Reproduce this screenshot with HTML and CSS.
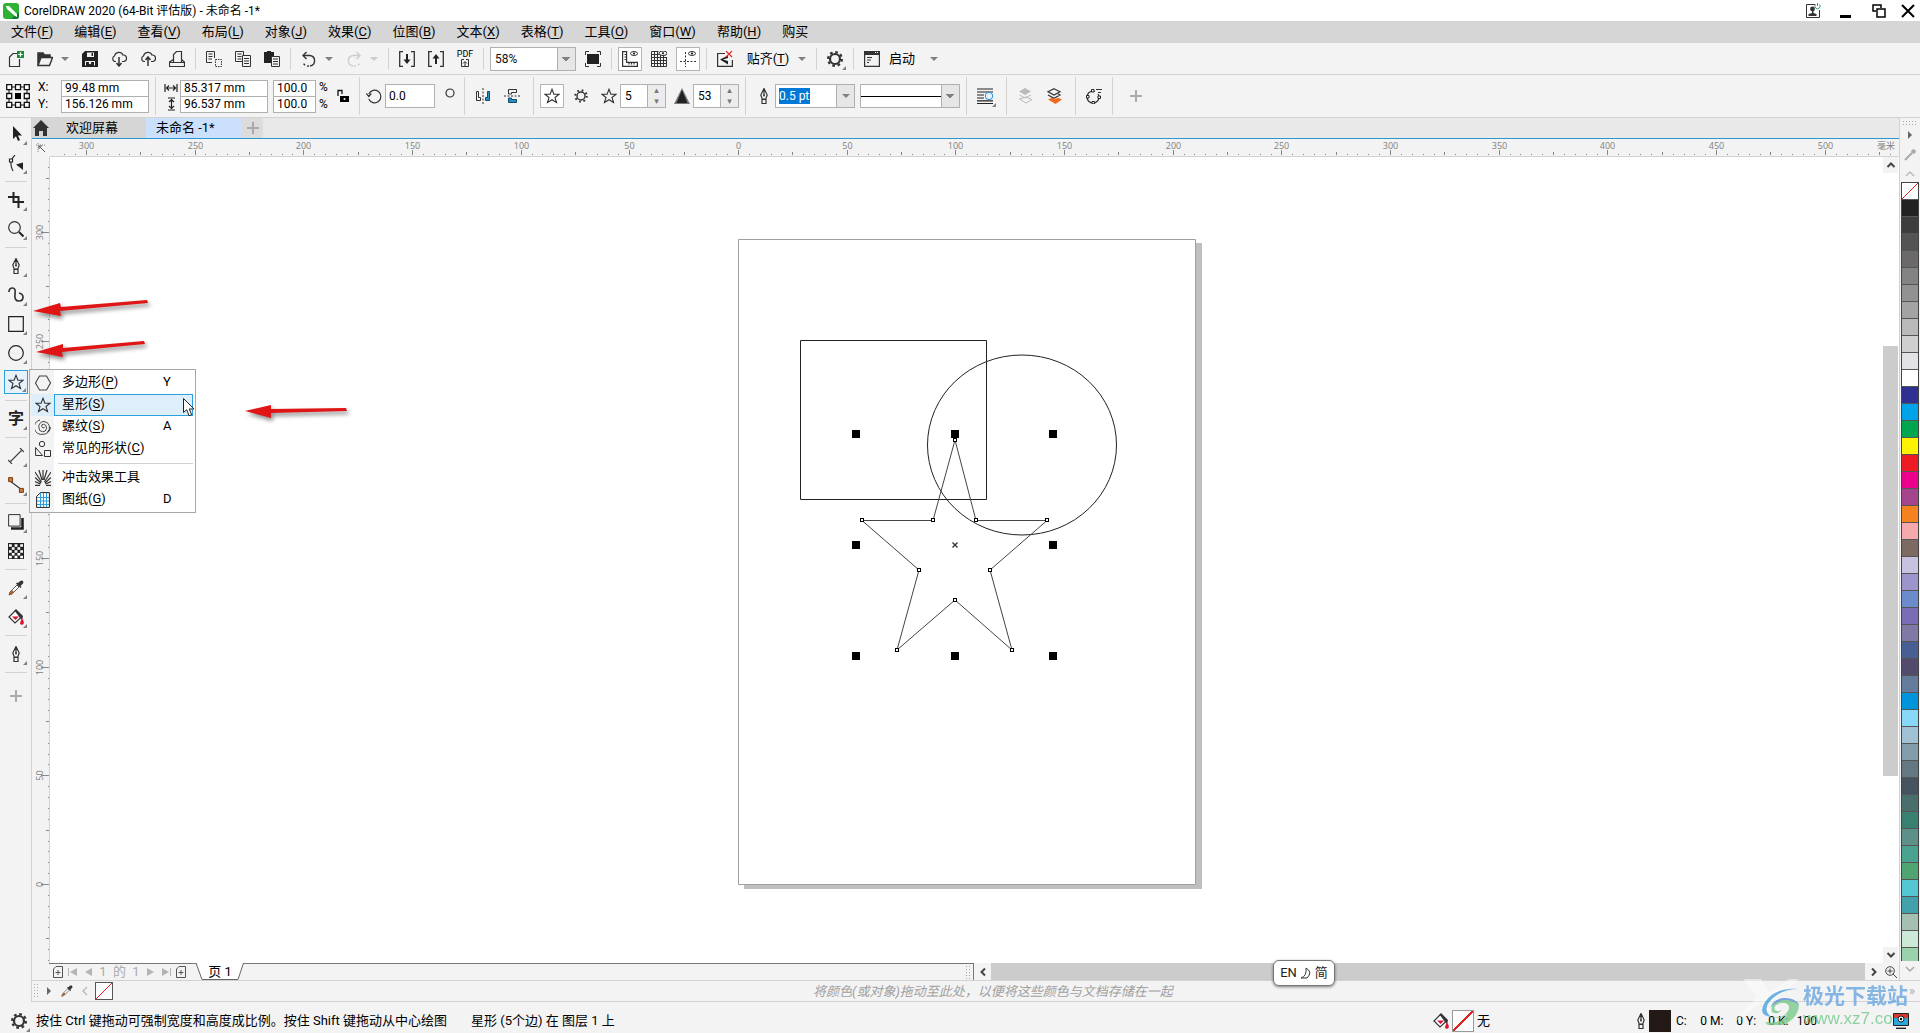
FILE: index.html
```html
<!DOCTYPE html>
<html lang="zh-CN">
<head>
<meta charset="utf-8">
<title>CorelDRAW 2020 (64-Bit 评估版) - 未命名 -1*</title>
<link rel="stylesheet" href="styles.css">
</head>
<body>
<svg class="sprite" aria-hidden="true">
  <symbol id="star" viewBox="0 0 16 16"><path d="M8 1.2l1.9 4.9 5.2.2-4.1 3.2 1.5 5L8 11.7l-4.5 2.8 1.5-5L.9 6.3l5.2-.2z" fill="none" stroke="currentColor" stroke-width="1.1"/></symbol>
  <symbol id="pen" viewBox="0 0 16 16"><path d="M8 .5L4.8 7l1.4 4h3.6l1.4-4zM8 1v6M6 11.5h4v4H6z" fill="none" stroke="currentColor" stroke-width="1.2"/><circle cx="8" cy="7.5" r="1" fill="currentColor"/></symbol>
  <symbol id="gear" viewBox="0 0 16 16"><circle cx="8" cy="8" r="5" fill="none" stroke="currentColor" stroke-width="2.2"/><circle cx="8" cy="8" r="6.9" fill="none" stroke="currentColor" stroke-width="2.2" stroke-dasharray="2.7 2.72"/></symbol>
  <symbol id="caret" viewBox="0 0 8 4"><path d="M0 0h8L4 4z" fill="currentColor"/></symbol>
  <symbol id="dropper" viewBox="0 0 16 16"><path d="M1 15l1-3 7-7 2 2-7 7z" fill="#fff" stroke="#555" stroke-width="1"/><path d="M1 15l1-3 2-2 2 2-2 2z" fill="#b5652b"/><path d="M8 3.5L12.5 8l1-1-1-1 2.5-2.5Q16 1 14 .5 12.500 0 10 3L9 2.500z" fill="#333"/></symbol>
  <symbol id="bucket" viewBox="0 0 16 16"><path d="M7.500 1.500L1 8l6 6 6.500-6z" fill="#fff" stroke="#333" stroke-width="1.200"/><path d="M6.500 1.500L8 0l7 7-1 4-2-2z" fill="#333"/><path d="M4 7.500h7L7.500 11z" fill="#e01030"/><path d="M14 9q3 5 1 6.500-3 1-3-1.500z" fill="#e01030"/></symbol>
  <symbol id="addpage" viewBox="0 0 10 12"><path d="M3 .5h6.500v11H.5V3zM2.500 6.500h5M5 4v5" fill="none" stroke="#555"/></symbol>
  <symbol id="plus" viewBox="0 0 12 12"><path d="M6 0v12M0 6h12" stroke="#aaa" stroke-width="2"/></symbol>
</svg>

<header class="titlebar">
  <svg class="logo" viewBox="0 0 16 16"><rect width="16" height="16" rx="3" fill="#2eb135"/><path d="M16 9v4a3 3 0 0 1-3 3H8z" fill="#0c7a2e"/><path d="M3 3l3 0 8 8v3l-2-1-8-7z" fill="#fff"/></svg>
  <h1>CorelDRAW 2020 (64-Bit 评估版) - 未命名 -1*</h1>
  <div class="window-buttons">
    <button aria-label="账户"><svg class="ic" viewBox="0 0 16 16"><path d="M10 1.500H1.500v13h13V7" fill="none" stroke="#333"/><circle cx="7.500" cy="6" r="2.400" fill="#333"/><path d="M7 7h1.500v3l3 1v2h-8v-2L7 10z" fill="#333"/><path d="M10.500 1.500a2.600 2.600 0 1 0 4 0M12.500 0v3" fill="none" stroke="#2a9d5c"/></svg></button>
    <button aria-label="最小化"><svg class="ic" viewBox="0 0 16 16"><path d="M2 13.500h11" stroke="#000" stroke-width="3"/></svg></button>
    <button aria-label="还原"><svg class="ic" viewBox="0 0 16 16"><path d="M5 8H2V2h8v3M6 6h8v8H6z" fill="none" stroke="#000" stroke-width="1.500"/></svg></button>
    <button aria-label="关闭"><svg class="ic" viewBox="0 0 16 16"><path d="M2 2l12 12M14 2L2 14" stroke="#000" stroke-width="2"/></svg></button>
  </div>
</header>

<nav class="menubar">
  <button>文件(<u>F</u>)</button><button>编辑(<u>E</u>)</button><button>查看(<u>V</u>)</button><button>布局(<u>L</u>)</button><button>对象(<u>J</u>)</button><button>效果(<u>C</u>)</button><button>位图(<u>B</u>)</button><button>文本(<u>X</u>)</button><button>表格(<u>T</u>)</button><button>工具(<u>O</u>)</button><button>窗口(<u>W</u>)</button><button>帮助(<u>H</u>)</button><button>购买</button>
</nav>

<div class="toolbar standard">
  <button class="tb" aria-label="新建"><svg class="ic" viewBox="0 0 16 16"><path d="M9 2.500H5L1.500 6v9.500h10V8" fill="none" stroke="#333" stroke-width="1.200"/><path d="M9 0h7v7H9z" fill="#1a8a3a"/><path d="M12.500 1.200v4.600M10.200 3.500h4.600" stroke="#fff" stroke-width="1.200"/></svg></button>
  <span class="split"><button class="tb" aria-label="打开"><svg class="ic" viewBox="0 0 16 16"><path d="M1 14V2h5l1.500 2H13v3" fill="none" stroke="#333" stroke-width="1.500"/><path d="M1 14.500L4 6.500h11.500l-3 8z" fill="#f3f3f3" stroke="#333" stroke-width="1.400"/><path d="M1 2h5l1 2h6v2H4l-3 7z" fill="#333"/></svg></button><button class="dd" aria-label="最近文件"><svg><use href="#caret"/></svg></button></span>
  <button class="tb" aria-label="保存"><svg class="ic" viewBox="0 0 16 16"><path d="M3 0h13v16H0V3z" fill="#222"/><path d="M5 1.500h7V6H5zM3 10h10v4.500H3z" fill="#f3f3f3"/><path d="M9.500 2h1.500v3H9.500zM4 11h8v4H4z" fill="#222"/><circle cx="8" cy="12" r="1.200" fill="#f3f3f3"/></svg></button>
  <button class="tb" aria-label="从云打开"><svg class="ic" viewBox="0 0 16 16"><path d="M5 10.500H3.500a3 3 0 0 1 0-5.500 4.500 4.500 0 0 1 8.500-1 3.300 3.300 0 0 1 1 6.500H11" fill="none" stroke="#333" stroke-width="1.200"/><path d="M8 6v8M5.500 12L8 15l2.500-3" fill="none" stroke="#333" stroke-width="1.500"/></svg></button>
  <button class="tb" aria-label="保存到云"><svg class="ic" viewBox="0 0 16 16"><path d="M5 10.500H3.500a3 3 0 0 1 0-5.500 4.500 4.500 0 0 1 8.500-1 3.300 3.300 0 0 1 1 6.500H11" fill="none" stroke="#333" stroke-width="1.200"/><path d="M8 15V7M5.500 9L8 6l2.500 3" fill="none" stroke="#333" stroke-width="1.500"/></svg></button>
  <button class="tb" aria-label="打印"><svg class="ic" viewBox="0 0 16 16"><path d="M4.500 11V3.500l3-3h5V11M4.500 8.500L.5 11v4.500h15V11l-3-2.500M1 11.500h14" fill="none" stroke="#333" stroke-width="1.200"/></svg></button>
  <i class="sep"></i>
  <button class="tb" aria-label="剪切"><svg class="ic" viewBox="0 0 16 16"><path d="M8.500 7V.5h-8v11H6M2.500 3h4M2.500 5.500h4M2.500 8H6" fill="none" stroke="#333"/><path d="M9.500 8.500h6v7h-6z" fill="none" stroke="#333" stroke-dasharray="1.500 1"/></svg></button>
  <button class="tb" aria-label="复制"><svg class="ic" viewBox="0 0 16 16"><path d="M.5.500h8v10h-8zM2.500 3h4M2.500 5.500h4M2.500 8h4" fill="none" stroke="#333"/><path d="M7.500 4.500h8v11h-8z" fill="#f3f3f3" stroke="#333"/><path d="M9 7.500h5M9 10h5M9 12.500h5" stroke="#333"/></svg></button>
  <button class="tb" aria-label="粘贴"><svg class="ic" viewBox="0 0 16 16"><path d="M0 1h3V0h4v1h3v11H0z" fill="#222"/><path d="M7.500 5.500h8v10h-8z" fill="#f3f3f3" stroke="#333"/><path d="M9 8h5M9 10.500h5M9 13h5" stroke="#333"/></svg></button>
  <i class="sep"></i>
  <span class="split"><button class="tb" aria-label="撤消"><svg class="ic" viewBox="0 0 16 16"><path d="M3 4.500h6a5.300 5.300 0 0 1 0 10.500" fill="none" stroke="#333" stroke-width="1.400"/><path d="M5.500 1L2 4.500 5.500 8" fill="none" stroke="#333" stroke-width="1.400"/><path d="M8 15a5 5 0 0 1-6-4" fill="none" stroke="#333" stroke-width="1.400" stroke-dasharray="2 2"/></svg></button><button class="dd" aria-label="撤消列表"><svg><use href="#caret"/></svg></button></span>
  <span class="split off"><button class="tb" aria-label="重做" disabled><svg class="ic" viewBox="0 0 16 16"><path d="M13 4.500H7A5.300 5.300 0 0 0 7 15M10.500 1L14 4.500 10.500 8" fill="none" stroke="#ccc" stroke-width="1.400"/><path d="M8 15a5 5 0 0 0 6-4" fill="none" stroke="#ccc" stroke-width="1.400" stroke-dasharray="2 2"/></svg></button><button class="dd" aria-label="重做列表" disabled><svg><use href="#caret"/></svg></button></span>
  <i class="sep"></i>
  <button class="tb" aria-label="导入"><svg class="ic" viewBox="0 0 16 16"><path d="M4 .7H.7v14.600H4M12 .7h3.300v14.600H12" fill="none" stroke="#333" stroke-width="1.300"/><path d="M8 3v7" stroke="#222" stroke-width="2"/><path d="M4.500 8.500h7L8 13z" fill="#222"/></svg></button>
  <button class="tb" aria-label="导出"><svg class="ic" viewBox="0 0 16 16"><path d="M4 .7H.7v14.600H4M12 .7h3.300v14.600H12" fill="none" stroke="#333" stroke-width="1.300"/><path d="M8 13V6" stroke="#222" stroke-width="2"/><path d="M4.500 7.500h7L8 3z" fill="#222"/></svg></button>
  <button class="tb pdf" aria-label="发布为 PDF"><span>PDF</span><svg viewBox="0 0 8 8"><path d="M3 .5H.5v7h7v-7H5M4 7V3M2 4.500L4 2.500l2 2" fill="none" stroke="#333"/></svg></button>
  <i class="sep"></i>
  <select class="combo zoom" aria-label="缩放级别"><option>58%</option></select>
  <button class="tb" aria-label="全屏预览"><svg class="ic" viewBox="0 0 16 16"><path d="M2 3h12v10H2z" fill="#222"/><path d="M.5 4V.5H4M12 .5h3.500V4M15.500 12v3.500H12M4 15.500H.5V12" fill="none" stroke="#333"/></svg></button>
  <i class="sep"></i>
  <button class="tb on" aria-label="显示标尺"><svg class="ic" viewBox="0 0 16 16"><path d="M.6.600h4v10.800h10.800v4H.6zM2.500 3.500h2M2.500 6h2M2.500 8.500h2M7 11.500v2M9.500 11.500v2M12 11.500v2" fill="none" stroke="#333" stroke-width="1.200"/><ellipse cx="12" cy="2.500" rx="3.500" ry="2" fill="none" stroke="#333"/><circle cx="12" cy="2.500" r="1"/></svg></button>
  <button class="tb" aria-label="显示网格"><svg class="ic" viewBox="0 0 16 16"><path d="M.5.500v15h15V6M.5.500h7M.5 3.500h15M.5 6.500h15M.5 9.500h15M.5 12.500h15M3.500.500v15M6.500.500v15M9.500 4v11.500M12.500 4v11.500" fill="none" stroke="#333"/><ellipse cx="12" cy="2.300" rx="4" ry="2.300" fill="#f3f3f3" stroke="#333"/><circle cx="12" cy="2.300" r="1"/></svg></button>
  <button class="tb on" aria-label="显示辅助线"><svg class="ic" viewBox="0 0 16 16"><path d="M0 10.500h16M5.500 1v15" stroke="#333" stroke-dasharray="2 1.500"/><ellipse cx="12" cy="2.500" rx="3.500" ry="2" fill="none" stroke="#333"/><circle cx="12" cy="2.500" r="1"/></svg></button>
  <i class="sep"></i>
  <button class="tb" aria-label="关闭贴齐"><svg class="ic" viewBox="0 0 16 16"><path d="M8 2.500H.6v12.900h14.800V9" fill="none" stroke="#333" stroke-width="1.200"/><path d="M3 8.500l8-4v9z" fill="#222"/><path d="M6 8.500l5-1.500v3z" fill="#f3f3f3"/><path d="M9 0l6 6M15 0L9 6" stroke="#e3262d" stroke-width="1.200"/></svg></button>
  <span class="split"><button class="txt snap">贴齐(<u>T</u>)</button><button class="dd" aria-label="贴齐选项"><svg><use href="#caret"/></svg></button></span>
  <i class="sep"></i>
  <button class="tb fly" aria-label="选项"><svg class="ic"><use href="#gear"/></svg></button>
  <i class="sep"></i>
  <button class="tb" aria-label="应用程序启动器"><svg class="ic" viewBox="0 0 16 16"><path d="M.6.600h14.800v14.800H.6z" fill="none" stroke="#333" stroke-width="1.200"/><path d="M0 0h16v4H0z" fill="#333"/><path d="M11 1.500h1M13 1.500h1" stroke="#fff"/><path d="M3 6.500h5M3 9h4M3 11.500h2" stroke="#333"/></svg></button>
  <span class="split"><button class="txt">启动</button><button class="dd wide" aria-label="启动选项"><svg><use href="#caret"/></svg></button></span>
</div>

<div class="toolbar property">
  <svg class="origin" viewBox="0 0 24 24"><path d="M3 3h18v18H3z" fill="none" stroke="#111"/><g fill="#fff" stroke="#111" stroke-width="1.300"><path d="M.7.700h5v5h-5zM9.500.700h5v5h-5zM18.300.700h5v5h-5zM.7 9.500h5v5h-5zM18.300 9.500h5v5h-5zM.7 18.300h5v5h-5zM9.500 18.300h5v5h-5zM18.300 18.300h5v5h-5z"/></g><path d="M9 9h6v6H9z"/></svg>
  <div class="pair labels"><label for="px">X:</label><label for="py">Y:</label></div>
  <div class="pair"><input id="px" value="99.48 mm"><input id="py" value="156.126 mm"></div>
  <i class="sep"></i>
  <div class="pair icons"><svg viewBox="0 0 14 14"><path d="M1 3v8M13 3v8M2 7h10M5 4.500L2.500 7 5 9.500M9 4.500L11.500 7 9 9.500" fill="none" stroke="#222" stroke-width="1.200"/></svg><svg viewBox="0 0 14 14"><path d="M4 1h7M4 13h7M7.500 2v10M5 5l2.500-2.500L10 5M5 9l2.500 2.500L10 9" fill="none" stroke="#222" stroke-width="1.200"/></svg></div>
  <div class="pair size"><input aria-label="宽度" value="85.317 mm"><input aria-label="高度" value="96.537 mm"></div>
  <div class="pair scale"><input aria-label="水平缩放" value="100.0"><input aria-label="垂直缩放" value="100.0"></div>
  <div class="pair pct"><span>%</span><span>%</span></div>
  <button class="tb lock" aria-label="锁定比率"><svg class="ic" viewBox="0 0 16 16"><path d="M3 8V2.500h4V6" fill="none" stroke="#111" stroke-width="1.300"/><path d="M5 8h9v6H5z"/><circle cx="9.500" cy="11" r="1" fill="#fff"/></svg></button>
  <i class="sep"></i>
  <label class="ic" for="rot"><svg class="ic" viewBox="0 0 16 16"><path d="M2.500 11a6.300 6.300 0 1 0 0-5M0 5.500L2.500 8.500 5 5.500" fill="none" stroke="#333" stroke-width="1.200" transform="translate(.3)"/></svg></label>
  <input id="rot" class="field rot" value="0.0">
  <svg class="degree" viewBox="0 0 10 10"><circle cx="5" cy="5" r="4" fill="none" stroke="#333" stroke-width="1.200"/></svg>
  <i class="sep"></i>
  <button class="tb" aria-label="水平镜像"><svg class="ic" viewBox="0 0 16 16"><path d="M1.500 3.500h2v6h2v3h-4z" fill="none" stroke="#333"/><path d="M8 0v16" stroke="#333" stroke-dasharray="2 1.500"/><path d="M14.500 3.500h-2v6h-2v3h4z" fill="#2a8fc0" stroke="#154b66"/></svg></button>
  <button class="tb" aria-label="垂直镜像"><svg class="ic" viewBox="0 0 16 16"><path d="M4.500 1.500h8v3h-5v1.500h-3z" fill="none" stroke="#333"/><path d="M0 8h16" stroke="#333" stroke-dasharray="2 1.500"/><path d="M4.500 10h3v1.500h5v3h-8z" fill="#2a8fc0" stroke="#154b66"/></svg></button>
  <i class="sep push"></i>
  <button class="tb on" aria-label="星形"><svg class="ic"><use href="#star"/></svg></button>
  <button class="tb" aria-label="复杂星形"><svg class="ic" viewBox="0 0 16 16"><circle cx="8" cy="8" r="4" fill="none" stroke="#333" stroke-width="1.400"/><circle cx="8" cy="8" r="5.700" fill="none" stroke="#333" stroke-width="2" stroke-dasharray="1.700 2.780"/></svg></button>
  <div class="spin"><label for="pts"><svg class="ic"><use href="#star"/></svg></label><input id="pts" value="5"><div><button aria-label="增加点数">▴</button><button aria-label="减少点数">▾</button></div></div>
  <div class="spin sharp"><label for="shp"><svg class="ic" viewBox="0 0 16 16"><path d="M8 0l8 16H0z" fill="#777"/><path d="M8 2l5.500 13h-11z" fill="#222"/></svg></label><input id="shp" value="53"><div><button aria-label="增加锐度">▴</button><button aria-label="减少锐度">▾</button></div></div>
  <i class="sep"></i>
  <label class="tb" for="ow"><svg class="ic"><use href="#pen"/></svg></label>
  <div class="combobox"><input id="ow" value="0.5 pt"><button aria-label="轮廓宽度"><svg><use href="#caret"/></svg></button></div>
  <select class="combo line" aria-label="线条样式"><option aria-label="实线"></option></select>
  <i class="sep"></i>
  <button class="tb fly" aria-label="文本换行"><svg class="ic" viewBox="0 0 16 16"><path d="M0 1h16M0 4h16M0 7h7M0 10h7M0 12.800h16M0 15.500h16" stroke="#222" stroke-width="1.200"/><circle cx="12" cy="8" r="3.700" fill="#e4f3fd" stroke="#2a8fd0"/></svg></button>
  <i class="sep push"></i>
  <button class="tb" aria-label="到图层前面" disabled><svg class="ic" viewBox="0 0 16 16"><path d="M8 0l6 3.500L8 7 2 3.500z" fill="#bbb"/><path d="M2.500 7L8 10l6-3M2.500 11L9 15l6-3.500L9 9z" fill="none" stroke="#bbb"/></svg></button>
  <button class="tb" aria-label="到图层后面"><svg class="ic" viewBox="0 0 16 16"><path d="M8 .7l6 3L8 7 2 3.700zM2 7l6 3.300L14 7l-2-1" fill="none" stroke="#333" stroke-width="1.200"/><path d="M2 11.500L6 9.800l3 1.500 3-1.500 4 1.700L9.500 16z" fill="#f26a1b"/></svg></button>
  <i class="sep push"></i>
  <button class="tb" aria-label="转换为曲线"><svg class="ic" viewBox="0 0 16 16"><circle cx="7" cy="9" r="6" fill="none" stroke="#333" stroke-width="1.200"/><path d="M9 0h7v6H9z" fill="#f3f3f3"/><g fill="#fff" stroke="#222"><path d="M5.500 1.500h2.500V4H5.500zM.5 7.500H3V10H.5zM6 13.500h2.500v2.300H6zM12 8h2.500v2.500H12z"/></g><path d="M10 1.500h6M12 4.500h3" fill="none" stroke="#333"/></svg></button>
  <i class="sep"></i>
  <button class="tb add" aria-label="自定义"><svg><use href="#plus"/></svg></button>
</div>

<main class="work">
  <aside class="toolbox">
    <button class="tb fly" aria-label="选择工具"><svg class="ic" viewBox="0 0 16 16"><path d="M5 0v13l3-2.800L10 15l2-1-2-4.500h4z" fill="#222"/></svg></button>
    <button class="tb fly" aria-label="形状工具"><svg class="ic" viewBox="0 0 16 16"><path d="M7 0Q0 7 5 16" fill="none" stroke="#333" stroke-width="1.200"/><path d="M1.500 4h3v3h-3z" fill="#fff" stroke="#222" stroke-width="1.200"/><path d="M8 9.500l7-2v7.500l-2.500-2z" fill="#222"/></svg></button>
    <hr>
    <button class="tb fly" aria-label="裁剪工具"><svg class="ic" viewBox="0 0 16 16"><path d="M5.500 0v10H16M0 5h10.500v11" fill="none" stroke="#222" stroke-width="2"/></svg></button>
    <button class="tb fly" aria-label="缩放工具"><svg class="ic" viewBox="0 0 16 16"><circle cx="6.500" cy="6.500" r="5.800" fill="none" stroke="#333" stroke-width="1.200"/><path d="M11 11l4.500 4.500" stroke="#222" stroke-width="2"/></svg></button>
    <hr>
    <button class="tb fly" aria-label="手绘工具"><svg class="ic"><use href="#pen"/></svg></button>
    <button class="tb fly" aria-label="曲线工具"><svg class="ic" viewBox="0 0 16 16"><path d="M1 5Q1 1 4.500 1 8 1 7 7q-1 7 4 7 4 0 4-4 0-3-4-4" fill="none" stroke="#333" stroke-width="1.700"/></svg></button>
    <button class="tb fly" aria-label="矩形工具"><svg class="ic" viewBox="0 0 16 16"><path d="M.7.700h14.600v14.600H.7z" fill="none" stroke="#222" stroke-width="1.200"/></svg></button>
    <button class="tb fly" aria-label="椭圆形工具"><svg class="ic" viewBox="0 0 16 16"><circle cx="8" cy="8" r="7.300" fill="none" stroke="#222" stroke-width="1.200"/></svg></button>
    <button class="tb fly active" aria-label="星形工具"><svg class="ic"><use href="#star"/></svg></button>
    <hr>
    <button class="tb fly glyph" aria-label="文本工具">字</button>
    <hr>
    <button class="tb fly" aria-label="平行度量工具"><svg class="ic" viewBox="0 0 16 16"><path d="M2 14L14 2M0 12l4 4M12 0l4 4" fill="none" stroke="#444" stroke-width="1.200"/></svg></button>
    <button class="tb fly" aria-label="连接器工具"><svg class="ic" viewBox="0 0 16 16"><path d="M2 4l12 9" stroke="#333" stroke-width="1.200"/><path d="M.6.600h4v4h-4zM11.400 11.400h4v4h-4z" fill="#c87941" stroke="#7a3f12"/></svg></button>
    <hr>
    <button class="tb fly" aria-label="阴影工具"><svg class="ic" viewBox="0 0 16 16"><path d="M3 14.500h11.500V4" fill="none" stroke="#222" stroke-width="2.600"/><path d="M.6.600h11.500v11.500H.6z" fill="#f3f3f3" stroke="#333"/></svg></button>
    <button class="tb" aria-label="透明度工具"><svg class="ic" viewBox="0 0 16 16"><path d="M0 0h16v16H0z" fill="#222"/><path d="M1 2.500h14M1 8.500h14M1 14h14" stroke="#fff" stroke-width="2.500" stroke-dasharray="2.800 2.800"/><path d="M3.800 5.500h11M3.800 11.300h11" stroke="#fff" stroke-width="2.500" stroke-dasharray="2.800 2.800"/></svg></button>
    <hr>
    <button class="tb fly" aria-label="颜色滴管工具"><svg class="ic"><use href="#dropper"/></svg></button>
    <button class="tb fly" aria-label="交互式填充工具"><svg class="ic"><use href="#bucket"/></svg></button>
    <hr>
    <button class="tb fly" aria-label="轮廓笔"><svg class="ic"><use href="#pen"/></svg></button>
    <hr>
    <button class="tb tall" aria-label="自定义工具箱"><svg><use href="#plus"/></svg></button>
  </aside>

  <div class="content">
    <div class="docrow">
      <section class="document">
        <div class="tabs">
          <button class="home" aria-label="主页"><svg viewBox="0 0 16 16"><path d="M8 0l8 8h-2v8h-4v-5H6v5H2V8H0z" fill="#333"/></svg></button>
          <button class="tab">欢迎屏幕</button>
          <button class="tab current">未命名 -1*</button>
          <button class="newtab" aria-label="新建文档"><svg><use href="#plus"/></svg></button>
        </div>
        <div class="stage">
          <div class="corner"><svg viewBox="0 0 10 10"><path d="M0 2h10M2 0v10" stroke="#888" stroke-dasharray="1 1"/><path d="M3 3l6 6M3 6V3h3" fill="none" stroke="#555"/></svg></div>
          <svg class="hruler" id="hruler"></svg>
          <svg class="vruler" id="vruler"></svg>
          <div class="view">
            <svg class="drawing" role="img" aria-label="绘图页面">
              <g transform="translate(-50 -157)">
                <path d="M744 243h458v646H744z" fill="#bfbfbf"/>
                <path d="M738.500 239.500h457v645h-457z" fill="#fff" stroke="#a0a0a0"/>
                <g fill="none" stroke="#222">
                  <path d="M800.500 340.500h186v159h-186z"/>
                  <ellipse cx="1022" cy="445" rx="94.500" ry="90"/>
                  <path d="M955 440l21 80.500h71L990 570l22 80-57-50-58 50 22-80-57-49.500h71z" stroke="#444"/>
                </g>
                <g id="nodes"></g>
                <g id="handles"></g>
                <path d="M952.500 542.500l5 5M957.500 542.500l-5 5" stroke="#333" stroke-width="1.300"/>
              </g>
            </svg>
          </div>
          <div class="vscroll"><button aria-label="向上滚动"><svg viewBox="0 0 10 10"><path d="M1.500 7L5 3.500 8.500 7" /></svg></button><div class="track"><div class="thumb"></div></div><button aria-label="向下滚动"><svg viewBox="0 0 10 10"><path d="M1.500 3L5 6.500 8.500 3"/></svg></button></div>
        </div>
        <div class="pagerow">
          <div class="pagenav">
            <button aria-label="前面添加页"><svg class="pg"><use href="#addpage"/></svg></button>
            <button aria-label="第一页"><svg class="arr" viewBox="0 0 10 8"><path d="M0 0h1v8H0zM9 0v8L2 4z"/></svg></button>
            <button aria-label="上一页"><svg class="arr" viewBox="0 0 10 8"><path d="M9 0v8L2 4z"/></svg></button>
            <span>1</span><span>的</span><span>1</span>
            <button aria-label="下一页"><svg class="arr" viewBox="0 0 10 8"><path d="M1 0v8l7-4z"/></svg></button>
            <button aria-label="最后一页"><svg class="arr" viewBox="0 0 10 8"><path d="M9 0h1v8H9zM1 0v8l7-4z"/></svg></button>
            <button aria-label="后面添加页"><svg class="pg"><use href="#addpage"/></svg></button>
            <button class="pagetab"><svg viewBox="0 0 48 17" preserveAspectRatio="none"><path d="M0 0l6 16.500h36L47.500 0" fill="#fff" stroke="#666"/></svg><span>页 1</span></button>
            <i class="grip"></i>
          </div>
          <div class="hscroll"><button aria-label="向左滚动"><svg viewBox="0 0 10 10"><path d="M7 1.500L3.500 5 7 8.500"/></svg></button><div class="thumb"></div><button aria-label="向右滚动"><svg viewBox="0 0 10 10"><path d="M3 1.500L6.500 5 3 8.500"/></svg></button><button aria-label="导航器"><svg class="nav" viewBox="0 0 12 12"><circle cx="5" cy="5" r="4.300"/><path d="M8 8l4 4M5 2.500v5M2.500 5h5" /></svg></button></div>
        </div>
      </section>
      <aside class="palette">
        <i class="grip"></i>
        <button aria-label="调色板菜单"><svg class="s10" viewBox="0 0 10 10"><path d="M3 1l4 4-4 4z" fill="#666"/></svg></button>
        <button class="eye" aria-label="滴管"><svg class="s12" viewBox="0 0 12 12"><path d="M1 11l7-7" stroke="#aaa" stroke-width="2"/><circle cx="9.500" cy="2.500" r="2.300" fill="#aaa"/></svg></button>
        <button class="up" aria-label="向上"><svg class="s10" viewBox="0 0 10 10"><path d="M1 7l4-4 4 4" fill="none" stroke="#bbb" stroke-width="1.500"/></svg></button>
        <div class="swatches" id="swatches"></div>
        <button class="down" aria-label="向下"><svg class="s10" viewBox="0 0 10 10"><path d="M1 3l4 4 4-4" fill="none" stroke="#aaa" stroke-width="1.500"/></svg></button>
      </aside>
    </div>
    <div class="docpalette">
      <i class="grip"></i>
      <svg class="s10" viewBox="0 0 10 10"><path d="M3 1l4 4-4 4z" fill="#666"/></svg>
      <svg class="s12"><use href="#dropper"/></svg>
      <svg class="s10" viewBox="0 0 10 10"><path d="M7 1L3 5l4 4" fill="none" stroke="#bbb" stroke-width="1.500"/></svg>
      <button class="none" aria-label="无颜色"></button>
      <p>将颜色(或对象)拖动至此处，以便将这些颜色与文档存储在一起</p>
      <span class="more">»</span>
    </div>
  </div>
</main>

<footer class="status">
  <button class="tb fly" aria-label="状态栏选项"><svg class="ic"><use href="#gear"/></svg></button>
  <p class="hint">按住 Ctrl 键拖动可强制宽度和高度成比例。按住 Shift 键拖动从中心绘图</p>
  <p class="object">星形 (5个边) 在 图层 1 上</p>
  <div class="fill"><svg class="ic"><use href="#bucket"/></svg><i class="none"></i><span>无</span></div>
  <div class="outline"><svg class="ic"><use href="#pen"/></svg><i class="black"></i><span class="cmyk"><b>C:</b><b>0</b><b>M:</b><b>0</b><b>Y:</b><b>0</b><b>K:</b><b>100</b></span></div>
  <svg class="proof" viewBox="0 0 16 16"><path d="M.5.500h15v12H.5z" fill="#2aa7dc" stroke="#222"/><path d="M1 1h14v4H1z" fill="#d33a2c"/><circle cx="8" cy="6" r="3" fill="#fff" stroke="#222"/><circle cx="8" cy="6" r="1.200"/><path d="M3 15.300h10" stroke="#222" stroke-width="1.400"/></svg>
</footer>

<div class="flyout" role="menu">
  <button><svg class="ic" viewBox="0 0 16 16"><path d="M4.500 1h7L15.500 8l-4 7h-7L.5 8z" fill="none" stroke="#444" stroke-width="1.100"/></svg><span>多边形(<u>P</u>)</span><kbd>Y</kbd></button>
  <button class="hot"><svg class="ic"><use href="#star"/></svg><span>星形(<u>S</u>)</span><kbd></kbd></button>
  <button><svg class="ic" viewBox="0 0 16 16"><path d="M9.500 8.500a1.800 1.800 0 1 1-1-3.300A3.800 3.800 0 1 1 4 9a5 5 0 0 1 5-6.500 6 6 0 0 1 3.500 10.500M8 15.300A7.300 7.300 0 0 1 5 1M15.400 8A7.300 7.300 0 0 1 8 15.300" stroke-width=".9"/></svg><span>螺纹(<u>S</u>)</span><kbd>A</kbd></button>
  <button><svg class="ic" viewBox="0 0 16 16"><circle cx="7" cy="3" r="2.700"/><path d="M.6 6.500v8h7zM9.500 9.500h6v6h-6z" /></svg><span>常见的形状(<u>C</u>)</span><kbd></kbd></button>
  <hr>
  <button><svg class="ic" viewBox="0 0 16 16"><path d="M8 10V0M7 10L4 0M9 10l3-10M6.500 12L0 2M9.500 12l6.500-10M6 13L0 7.500M10 13l6-5.500M5.500 14L0 11.500M10.500 14l5.500-2.500M0 15.300h5M11 15.300h5" stroke-width="1.200"/></svg><span>冲击效果工具</span><kbd></kbd></button>
  <button><svg class="ic" viewBox="0 0 16 16"><path d="M5.500.600h8.900v14.800H1.600V4.500z" fill="#fff" stroke="#222"/><path d="M2 5.500h12M2 9h12M2 12.500h12M5.500 1v14M8.500 1v14M11.500 1v14" stroke="#2aa0dd"/></svg><span>图纸(<u>G</u>)</span><kbd>D</kbd></button>
</div>

<svg class="callouts" aria-hidden="true">
  <g fill="#e01515">
    <path d="M147 300l1 3-88 8 1 5-28-5 27-8 1 4z"/>
    <path d="M144 341l1 3-83 8 1 5-27-5 27-8v4z"/>
    <path d="M346 408l1 3-76 2v5l-26-7 26-6v4z"/>
  </g>
  <path class="pointer" d="M183.500 398.500v14l3.200-2.800 2.300 6 2.700-1-2.500-5.700h4.800z" fill="#fff" stroke="#222"/>
</svg>

<div class="ime">EN <svg viewBox="0 0 12 12"><path d="M6 1q7 4 1 10H1q6-2 5-10z" fill="none" stroke="#333"/></svg> 简</div>

<div class="watermark">
  <svg class="ghost" viewBox="0 0 90 50"><path d="M12 2h18l8 14L58 2h10L42 24l8 10H36l-6-8L2 46 26 20z" fill="#fff" opacity=".6"/></svg>
  <svg class="swirl" viewBox="0 0 42 38"><path d="M38 2Q14 0 4 15q-8 13 6 15Q0 22 12 11 22 2 38 2z" fill="#4aa3df"/><path d="M10 30q14 2 18-8 1-7-8-6-8 2-6 7 5 3 8-2-5 8-11 4-3-8 9-12 14-2 18 4 0 14-16 21Q8 42 4 35q18 2 22-8-6 6-16 3z" fill="#7cc98a"/><path d="M9 22q2-9 13-11 12-1 16 7-10-7-19-4-8 3-10 8z" fill="#5a8fd8"/></svg>
  <div><strong>极光下载站</strong><em>www.xz7.com</em></div>
</div>
<script src="app.js"></script>
</body>
</html>
```
FILE: styles.css
```css
* { box-sizing: border-box; }
html, body { height: 100%; }
body {
  margin: 0; display: flex; flex-direction: column; min-height: 100vh; overflow: hidden;
  background: #f3f3f3; color: #000;
  font: 13px/16px Roboto, "Noto Sans CJK SC", sans-serif;
}
button, input, select { font: inherit; color: inherit; margin: 0; border-radius: 0; }
button { border: 0; padding: 0; background: none; white-space: nowrap; }
svg { display: block; flex: none; }
h1, p { margin: 0; font-weight: 400; }
u { text-underline-offset: 2px; }
.sprite { position: absolute; width: 0; height: 0; }
.ic { width: 16px; height: 16px; color: #333; }
.s10 { width: 10px; height: 10px; }
.s12 { width: 12px; height: 12px; }
.grip { background: radial-gradient(circle, #aaa 1px, transparent 1px) 0 0 / 3px 3px; }

.titlebar { flex: none; height: 21px; display: flex; align-items: center; background: #fff; padding: 0 4px 0 3px; }
.titlebar h1 { flex: 1; font-size: 12px; margin-left: 5px; }
.logo { width: 16px; height: 16px; }
.window-buttons { display: flex; gap: 17px; }
.window-buttons button:last-child { margin-left: -4px; }

.menubar { flex: none; height: 22px; background: #d6d6d6; display: flex; gap: 21px; padding: 0 11px; align-items: center; }

.toolbar { flex: none; display: flex; align-items: center; gap: 5px; padding: 0 4px; border-bottom: 1px solid #d2d2d2; }
.standard { height: 32px; }
.property { height: 43px; font-size: 12px; }
.tb { flex: none; width: 24px; height: 24px; display: flex; align-items: center; justify-content: center; position: relative; }
.tb.on { background: #fff; border: 1px solid #b4b4b4; }
.fly::after { content: ""; position: absolute; right: 1px; bottom: 1px; border: 2px solid; border-color: transparent #808080 #808080 transparent; }
.split { display: flex; align-items: center; }
.dd { width: 16px; height: 24px; display: flex; align-items: center; justify-content: center; color: #808080; }
.dd svg { width: 8px; height: 4px; }
.dd.wide { width: 38px; }
.off .dd { color: #ccc; }
.sep { flex: none; width: 1px; height: 22px; margin: 0 1px; background: #d2d2d2; }
.property .sep { height: 38px; }
.txt { height: 24px; }
.txt.snap { width: 52px; }
.pdf { flex-direction: column; gap: 1px; font: 9px/8px Roboto, sans-serif; align-items: center; }
.pdf svg { width: 8px; height: 8px; }
.combo { flex: none; appearance: none; height: 24px; border: 1px solid #b0b0b0; padding: 0 4px; color: #111; font-size: 12px;
  background: linear-gradient(45deg, transparent 50%, #808080 50%) right 9px center / 4px 4px no-repeat,
    linear-gradient(-45deg, transparent 50%, #808080 50%) right 5px center / 4px 4px no-repeat,
    linear-gradient(#b0b0b0, #b0b0b0) right 17px top / 1px 100% no-repeat,
    linear-gradient(#e6e6e6, #e6e6e6) right top / 17px 100% no-repeat, #fff; }
.zoom { width: 86px; }
.line { width: 100px; background:
    linear-gradient(45deg, transparent 50%, #808080 50%) right 9px center / 4px 4px no-repeat,
    linear-gradient(-45deg, transparent 50%, #808080 50%) right 5px center / 4px 4px no-repeat,
    linear-gradient(#b0b0b0, #b0b0b0) right 17px top / 1px 100% no-repeat,
    linear-gradient(#e6e6e6, #e6e6e6) right top / 17px 100% no-repeat,
    linear-gradient(#000, #000) left center / 80px 1px no-repeat, #fff; }

.origin { width: 24px; height: 24px; margin: 0 2px; }
.pair { flex: none; display: flex; flex-direction: column; width: 88px; }
.pair > * { height: 17px; line-height: 16px; }
.pair input { width: 100%; border: 1px solid #b0b0b0; padding: 0 3px; background: #fff; }
.pair input:last-child { margin-top: -1px; }
.pair.labels { width: 18px; margin-left: 1px; }
.pair.icons { width: 14px; margin-left: 2px; margin-right: -3px; gap: 2px; }
.pair.icons svg { width: 14px; height: 14px; }
.pair.scale { width: 43px; }
.pair.pct { width: 11px; margin-left: -2px; }
.lock { margin: 0 -2px 0 -4px; }
.field { height: 24px; border: 1px solid #b0b0b0; padding: 0 3px; background: #fff; }
.rot { width: 50px; margin-left: -2px; }
.degree { width: 10px; height: 10px; margin: 0 3px 6px 5px; }
.property .push { margin-left: 4px; }
label { flex: none; }
.spin { display: flex; align-items: center; }
.spin label { margin: 0 3px; }
.spin input { width: 28px; height: 24px; border: 1px solid #b0b0b0; padding: 0 4px; background: #fff; }
.spin div { display: flex; flex-direction: column; width: 18px; height: 24px; border: 1px solid #b0b0b0; border-left: 0; background: #ececec; }
.spin button { flex: 1; font: 9px/11px "DejaVu Sans", sans-serif; color: #777; }
.combobox { flex: none; display: flex; width: 80px; height: 24px; border: 1px solid #b0b0b0; margin-left: -6px; }
.combobox input { flex: 1; min-width: 0; border: 0; padding: 0 3px; color: #fff; background: linear-gradient(#0078d7, #0078d7) 3px center / 31px 16px no-repeat, #fff; }
.combobox button { width: 18px; display: grid; place-content: center; border-left: 1px solid #b0b0b0; background: #e6e6e6; color: #808080; }
.combobox svg { width: 8px; height: 4px; }
.add { margin-left: 5px; }
.add svg, .tall svg { width: 12px; height: 12px; }

.work { flex: 1; min-height: 0; display: flex; }
.toolbox { flex: none; width: 32px; padding: 4px 4px 0; display: flex; flex-direction: column; gap: 5px; border-right: 1px solid #d2d2d2; }
.toolbox hr { flex: none; width: 22px; height: 1px; border: 0; margin: 1px 0 1px 1px; background: #d2d2d2; }
.toolbox .active { background: #e5f1fb; border: 1px solid #2aa0dd; }
.toolbox .glyph { font-weight: 700; font-size: 16px; color: #222; }
.tb.tall { height: 34px; }

.content { flex: 1; min-width: 0; display: flex; flex-direction: column; }
.docrow { flex: 1; min-height: 0; display: flex; }
.document { flex: 1; min-width: 0; display: flex; flex-direction: column; }
.tabs { flex: none; height: 21px; display: flex; background: #e9e9e9; border-bottom: 1px solid #2a97cf; }
.home { width: 18px; background: #d6d6d6; display: grid; place-content: center; }
.home svg { width: 16px; height: 16px; }
.tab { width: 96px; padding-left: 16px; text-align: left; background: #d6d6d6; }
.tab.current { padding-left: 10px; background: #cae0fd; }
.newtab { width: 21px; background: #dcdcdc; display: grid; place-content: center; }
.newtab svg { width: 12px; height: 12px; }
.stage { flex: 1; min-height: 0; display: grid; grid-template: 18px 1fr / 18px 1fr 16px; }
.corner { display: grid; place-content: center; }
.corner svg { width: 10px; height: 10px; }
.hruler { grid-column: 2 / 4; width: 100%; height: 18px; border-bottom: 1px solid #d2d2d2; }
.vruler { width: 18px; height: 100%; border-right: 1px solid #d2d2d2; }
.hruler text, .vruler text { font: 9px "Open Sans", "Noto Sans CJK SC", sans-serif; fill: #808080; }
.view { min-width: 0; min-height: 0; background: #fff; overflow: hidden; }
.drawing { width: 100%; height: 100%; }
.vscroll { display: flex; flex-direction: column; background: #fff; padding-right: 1px; }
.vscroll button, .hscroll button { flex: none; display: grid; place-content: center; width: 17px; background: #f3f3f3; }
.vscroll button { height: 16px; width: 15px; }
.vscroll svg, .hscroll svg { width: 10px; height: 10px; fill: none; stroke: #444; stroke-width: 2px; }
.vscroll .track { flex: 1; }
.vscroll .thumb { margin-top: 173px; height: 430px; background: #ccc; }
.pagerow { flex: none; height: 17px; display: flex; padding-left: 17px; }
.pagenav { flex: 1; display: flex; align-items: center; gap: 5px; padding-left: 4px; border-top: 1px solid #777; border-right: 1px solid #777; color: #aaa; }
.pagenav .pg { width: 10px; height: 12px; }
.pagenav .arr { width: 10px; height: 8px; fill: #b4b4b4; }
.pagenav > span { min-width: 10px; text-align: center; }
.pagetab { position: relative; width: 48px; height: 17px; margin: 0 auto 0 5px; color: #000; }
.pagetab svg { position: absolute; top: -1px; left: 0; width: 48px; height: 17px; }
.pagetab span { position: relative; }
.pagenav .grip { width: 6px; height: 15px; margin-right: 2px; }
.hscroll { flex: none; width: 50%; display: flex; background: #f3f3f3; }
.hscroll .thumb { flex: 1; background: #ccc; }
.hscroll .nav { width: 12px; height: 12px; stroke-width: 1px; }

.palette { flex: none; width: 21px; border-left: 1px solid #d2d2d2; display: flex; flex-direction: column; align-items: center; padding-right: 1px; }
.palette .grip { width: 16px; height: 6px; margin-top: 2px; flex: none; }
.palette button { flex: none; display: grid; place-content: center; width: 18px; height: 18px; }
.palette .eye { height: 22px; }
.palette .up { height: 16px; }
.palette .down { height: 19px; padding-bottom: 4px; }
.swatches { flex: 1; min-height: 0; overflow: hidden; width: 18px; border: 1px solid #444; border-bottom: 0; }
.palette .swatches button { display: block; width: 16px; height: 17px; border-bottom: 1px solid #555; }
.none, .swatches .none { background: linear-gradient(to top left, transparent 47%, #d22 47%, #d22 53%, transparent 53%) #fff; }

.docpalette { flex: none; height: 22px; display: flex; align-items: center; gap: 5px; padding: 0 5px 0 1px; border-top: 1px solid #d2d2d2; border-bottom: 1px solid #d2d2d2; }
.docpalette .grip { width: 6px; height: 16px; }
.docpalette .none { width: 18px; height: 18px; border: 1px solid #555; }
.docpalette p { flex: 1; text-align: center; font-style: italic; color: #a0a0a0; padding: 1px 36px 0 0; }
.docpalette .more { color: #aaa; }
.docpalette .s12 { margin: 0 2px; }

.status { flex: none; height: 31px; display: flex; align-items: center; padding: 6px 11px 0 7px; }
.status .hint { margin-left: 5px; width: 435px; white-space: nowrap; }
.status .object { flex: 1; }
.fill, .outline { display: flex; align-items: center; }
.fill { width: 200px; gap: 3px; }
.fill .none { width: 22px; height: 22px; border: 1px solid #999; }
.outline { width: 260px; }
.black { width: 22px; height: 22px; background: #231a17; }
.cmyk { display: grid; grid-template-columns: 18px 16px 20px 16px 16px 16px 16px 26px; margin-left: 5px; }
.cmyk b { font-weight: 400; font-size: 12px; }
.cmyk b:nth-child(even) { text-align: right; padding-right: 3px; }
.proof { width: 16px; height: 16px; z-index: 5; }

.flyout { position: absolute; left: 29px; top: 369px; width: 167px; border: 1px solid #a8a8a8; padding: 2px 2px 1px 1px; background: linear-gradient(#f3f3f3, #f3f3f3) left / 24px 100% no-repeat, #fff; }
.flyout button { width: 100%; height: 22px; display: grid; grid-template-columns: 23px 1fr 37px; align-items: center; text-align: left; padding: 0; }
.flyout .ic { margin-left: 4px; fill: none; stroke: #333; }
.flyout span, .flyout kbd { height: 22px; font: inherit; padding: 2px 0 0 8px; }
.flyout kbd { padding-left: 7px; }
.flyout .hot { background: #deeefb; }
.flyout .hot span { border: 1px solid #2aa0dd; border-right: 0; padding: 1px 0 0 7px; }
.flyout .hot kbd { border: 1px solid #2aa0dd; border-left: 0; }
.flyout .hot .ic { stroke: none; }
.flyout hr { border: 0; height: 1px; background: #d2d2d2; margin: 3px 0 3px 27px; }

.callouts { position: absolute; left: 0; top: 0; width: 360px; height: 430px; pointer-events: none; }
.callouts g { filter: drop-shadow(2px 3px 2px rgba(0, 0, 0, .45)); }

.ime { position: absolute; right: 585px; bottom: 47px; width: 62px; height: 26px; display: flex; align-items: center; justify-content: center; gap: 3px; background: #fff; border: 1px solid #777; border-radius: 6px; box-shadow: 0 1px 3px rgba(0, 0, 0, .5); color: #222; }
.ime svg { width: 12px; height: 12px; }

.watermark { position: absolute; right: 9px; bottom: 6px; display: flex; align-items: center; pointer-events: none; opacity: .8; }
.watermark .ghost { position: absolute; right: 90px; bottom: 0; width: 90px; height: 50px; }
.watermark .swirl { position: relative; width: 42px; height: 38px; }
.watermark div { position: relative; width: 108px; display: flex; flex-direction: column; gap: 3px; }
.watermark strong { font-size: 21px; line-height: 22px; color: #6aa6e0; white-space: nowrap; }
.watermark em { font: 17px/17px "Liberation Sans", sans-serif; color: #72c98a; }
```
FILE: app.js
```js
const NS = 'http://www.w3.org/2000/svg';
const STEP = 2.1736 * 5; // pixels per five millimetres at 58% zoom

function add(parent, name, attrs, text) {
  const el = document.createElementNS(NS, name);
  for (const key in attrs) el.setAttribute(key, attrs[key]);
  if (text !== undefined) el.textContent = text;
  parent.appendChild(el);
}

function ruler(svg, zero, vertical) {
  const length = vertical ? svg.clientHeight : svg.clientWidth;
  for (let i = -80; i <= 110; i++) {
    const p = Math.round(zero + i * STEP) + 0.5;
    if (p < 4 || p > length) continue;
    const size = i % 10 === 0 ? (vertical ? 8 : 5) : i % 5 === 0 ? 3 : 1;
    add(svg, 'path', { d: vertical ? `M17 ${p}h${-size}` : `M${p} 16v${-size}`, stroke: '#888' });
    if (i % 10) continue;
    const label = Math.abs(i * 5);
    if (vertical) add(svg, 'text', { transform: `translate(11 ${p}) rotate(-90)`, 'text-anchor': 'middle' }, label);
    else add(svg, 'text', { x: p, y: 10, 'text-anchor': 'middle' }, label);
  }
  if (!vertical) add(svg, 'text', { x: length - 4, y: 10, 'text-anchor': 'end' }, '毫米');
}
ruler(document.getElementById('hruler'), 688, false);
ruler(document.getElementById('vruler'), 727, true);

const nodes = [[976, 520], [1047, 520], [990, 570], [1012, 650], [955, 600], [897, 650], [919, 570], [862, 520], [933, 520], [955, 440]];
for (const [x, y] of nodes) add(document.getElementById('nodes'), 'rect', { x: x - 1.5, y: y - 1.5, width: 3, height: 3, fill: '#fff', stroke: '#000' });
for (const y of [434, 545, 656]) for (const x of [856, 955, 1053]) {
  if (x === 955 && y === 545) continue;
  add(document.getElementById('handles'), 'rect', { x: x - 4, y: y - 4, width: 8, height: 8 });
}

const colors = '222222 3d3d3d 545454 6b6969 838383 929292 a3a3a3 b9b9b9 cfcfcf e3e3e5 ffffff 2e3192 00a2e8 00a550 fff200 ed1c24 ec008c a3458c f58220 f4a9ad 7d6a62 c7c2df 9c94cc 6a8ccb 7a6cb4 8079a5 475f92 524b6b 657b9c 0095da 87d7f7 a0c0d4 829cab 637881 44535f 496f6d 38806f 5c9088 4aa391 50a472 55c6d3 43a1ab a5bfb1 cce8d6 9ad2ac'.split(' ');
const swatches = document.getElementById('swatches');
swatches.innerHTML = '<button class="none" aria-label="无"></button>' +
  colors.map(c => `<button aria-label="#${c}" style="background:#${c}"></button>`).join('');
```
